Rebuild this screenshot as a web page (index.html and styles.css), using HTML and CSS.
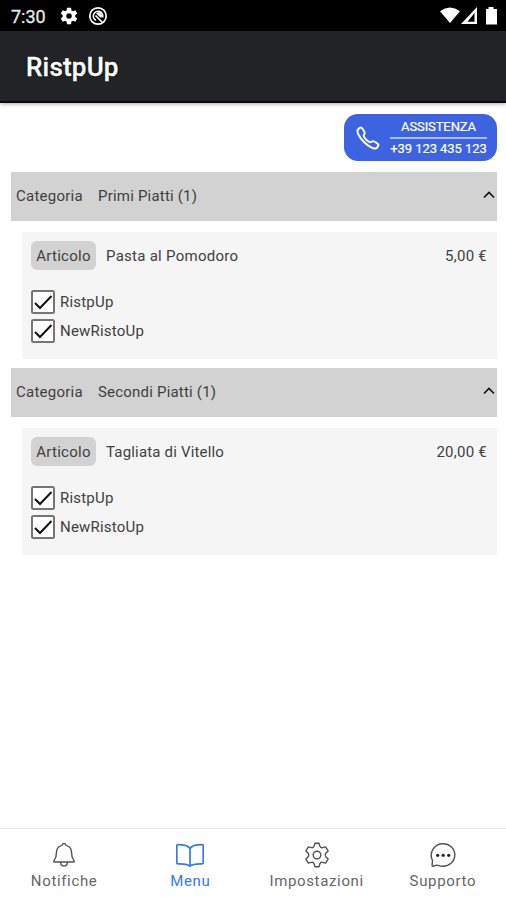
FILE: index.html
```html
<!DOCTYPE html>
<html lang="it">
<head>
<meta charset="utf-8">
<title>RistpUp</title>
<link rel="stylesheet" href="styles.css">
</head>
<body>
<div class="status">
  <span class="clock">7:30</span>
  <svg class="gear" viewBox="0 0 24 24"><path fill="#fff" fill-rule="evenodd" d="M19.400 13a7.600 7.600 0 0 0 0-2l2.500-1.900-2.300-4-2.900 1.200a7.600 7.600 0 0 0-1.800-1L14.400 2h-4.800l-.5 3.300a7.600 7.600 0 0 0-1.800 1L4.400 5.100l-2.300 4L4.600 11a7.600 7.600 0 0 0 0 2l-2.500 1.900 2.300 4 2.900-1.200a7.600 7.600 0 0 0 1.800 1l.5 3.300h4.800l.5-3.300a7.600 7.600 0 0 0 1.800-1l2.900 1.200 2.300-4zM12 15.300a3.300 3.300 0 1 1 0-6.600 3.300 3.300 0 0 1 0 6.600z"/></svg>
  <svg class="at" viewBox="0 0 20 20" fill="none" stroke="#fff"><circle cx="10" cy="10" r="8.200" stroke-width="1.700"/><path stroke-width="1.700" d="M8 14.300A4.700 4.700 0 1 1 14.500 11.500M7.500 9.500l6.500 6.500"/><path fill="#fff" stroke="none" d="M8 7.500a3.200 3.200 0 0 1 5 4.500z"/></svg>
  <svg class="signals" viewBox="0 0 60 18"><path fill="#fff" d="M0 4.200Q10 -3 20 4.200L10 16z"/><path fill="#fff" fill-rule="evenodd" d="M21 17L37 0v17zM27.500 14.800h7V6z"/><path fill="#fff" d="M48.500 0h5v2H57v15.500H46V2h2.500z"/></svg>
</div>
<header class="header"><h1>RistpUp</h1></header>
<main>
  <div class="help">
    <svg class="phone" viewBox="0 0 512 512"><path d="M451 374c-15.900-16-54.300-39.300-73-48.800-24.300-12.200-26.300-13.200-45.400.950-12.700 9.400-21.200 17.900-36.100 14.700s-47.300-21.100-75.700-49.400c-28.300-28.300-47.300-61.600-50.500-76.500s5.400-23.200 14.700-36c13.200-18 12.200-21 .9-45.300-8.800-18.800-32.900-57-48.900-72.800C119.900 44 119.900 47 108.800 51.600A160 160 0 0 0 83 65.400C67 76 58.100 84.900 51.900 98.100s-9 44.200 23 102.100 54.300 88.100 101 134.500S258.500 406.600 310.900 436c64.800 36.300 89.600 29.200 102.900 23s22.200-15 32.800-31a159 159 0 0 0 13.800-25.800c4.600-11.100 7.600-11.100-9.400-28.200z"/></svg>
    <div class="help-text"><span class="help-title">ASSISTENZA</span><span class="help-number">+39 123 435 123</span></div>
  </div>

  <section class="category">
    <div class="bar"><span class="label">Categoria</span><span class="name">Primi Piatti (1)</span><svg class="chev" viewBox="0 0 12 8"><path d="M1 6.500L6 1.500l5 5"/></svg></div>
    <article class="card">
      <div class="item"><span class="tag">Articolo</span><span class="dish">Pasta al Pomodoro</span><span class="price">5,00 €</span></div>
      <div class="check"><svg viewBox="0 0 24 24"><rect x="1" y="1" width="22" height="22" rx="1.500"/><path d="M4 13l5 5L20.500 6"/></svg><span>RistpUp</span></div>
      <div class="check"><svg viewBox="0 0 24 24"><rect x="1" y="1" width="22" height="22" rx="1.500"/><path d="M4 13l5 5L20.500 6"/></svg><span>NewRistoUp</span></div>
    </article>
  </section>

  <section class="category">
    <div class="bar"><span class="label">Categoria</span><span class="name">Secondi Piatti (1)</span><svg class="chev" viewBox="0 0 12 8"><path d="M1 6.500L6 1.500l5 5"/></svg></div>
    <article class="card">
      <div class="item"><span class="tag">Articolo</span><span class="dish dish-tight">Tagliata di Vitello</span><span class="price">20,00 €</span></div>
      <div class="check"><svg viewBox="0 0 24 24"><rect x="1" y="1" width="22" height="22" rx="1.500"/><path d="M4 13l5 5L20.500 6"/></svg><span>RistpUp</span></div>
      <div class="check"><svg viewBox="0 0 24 24"><rect x="1" y="1" width="22" height="22" rx="1.500"/><path d="M4 13l5 5L20.500 6"/></svg><span>NewRistoUp</span></div>
    </article>
  </section>
</main>
<nav class="tabs">
  <div class="tab"><svg viewBox="0 0 28 28"><path d="M4.500 21c-.8 0-1-.8-.5-1.400 1.500-1.800 2.400-2.600 2.400-7.600 0-4.300 2-6.600 5-7.400.6-.2 1-.6 1.200-1.200.4-1.200 2.400-1.200 2.800 0 .2.600.6 1 1.200 1.200 3 .8 5 3.100 5 7.400 0 5 .9 5.800 2.400 7.600.5.600.3 1.400-.5 1.400zM10.700 21.500c0 4.800 6.600 4.800 6.600 0"/></svg><span>Notifiche</span></div>
  <div class="tab active"><svg viewBox="0 0 28 28"><path d="M14 7.500C12 4.500 7 3.700 1.800 3.700c-.5 0-1 .4-1 1v17.100c0 .5.400 1 1 1 5 0 9.700-.3 12.200 2.500 2.500-2.800 7.200-2.500 12.200-2.500.6 0 1-.5 1-1V4.700c0-.6-.5-1-1-1C21 3.700 16 4.500 14 7.500zv17.800"/></svg><span>Menu</span></div>
  <div class="tab"><svg viewBox="0 0 28 28"><path d="M12 1.700h4l.9 2.900c.4 1.200 1.500 1.800 2.700 1.500l3-.7 2.500 4-2.100 2.200c-.9.900-.9 2.900 0 3.800l2.100 2.200-2.500 4-3-.7c-1.200-.3-2.300.3-2.700 1.500l-.9 2.900h-4l-.9-2.900c-.4-1.200-1.500-1.800-2.700-1.500l-3 .7-2.500-4L5 15.400c.9-.9.900-2.900 0-3.800L2.900 9.400l2.500-4 3 .7c1.200.3 2.300-.3 2.700-1.500z" transform="translate(0 .5)"/><circle cx="14" cy="14" r="3.800"/></svg><span>Impostazioni</span></div>
  <div class="tab"><svg viewBox="0 0 28 28"><path d="M3.500 19.500C-.5 11.500 5.500 2.800 14 2.800c6.700 0 11.800 5 11.800 11.300S20.500 25.300 14 25.300c-3 0-4.200-.7-5.800-1.200L4 25.200c-.6.100-1-.4-.9-.9z"/><g fill="currentColor" stroke="none"><circle cx="8.700" cy="14.300" r="1.600"/><circle cx="14.200" cy="14.300" r="1.600"/><circle cx="19.700" cy="14.300" r="1.600"/></g></svg><span>Supporto</span></div>
</nav>
</body>
</html>
```
FILE: styles.css
```css
* { box-sizing: border-box; }
body {
  margin: 0;
  width: 506px;
  height: 900px;
  display: flex;
  flex-direction: column;
  overflow: hidden;
  background: #fff;
  color: #404040;
  font-family: Roboto, "Liberation Sans", sans-serif;
  font-size: 15px;
}
svg { flex: none; display: block; }
.status {
  height: 31px;
  display: flex;
  align-items: center;
  background: #000;
  color: #e8e8e8;
  padding: 1px 8px 0 11px;
}
.clock { font-size: 18px; width: 48px; -webkit-text-stroke: .3px #e8e8e8; }
.gear { width: 20px; height: 20px; }
.at { width: 20px; height: 20px; margin-left: 9px; }
.signals { width: 60px; height: 18px; margin-left: auto; margin-right: -2px; }
.header {
  height: 72px;
  flex: none;
  display: flex;
  align-items: center;
  background: #222326;
  border-bottom: 2px solid #0b0b0c;
  padding: 2px 26px 0;
  box-shadow: 0 1px 4px rgba(0, 0, 0, .35);
}
h1 { margin: 0; font-size: 26px; font-weight: 500; letter-spacing: .2px; color: #fff; text-shadow: 0 0 2px #000; -webkit-text-stroke: .3px #fff; }
main { flex: 1; padding: 11px 9px 0 11px; }
.help {
  width: 153px;
  height: 47px;
  margin: 0 0 11px auto;
  padding: 0 10px 0 11px;
  display: flex;
  align-items: center;
  gap: 9px;
  background: #3d63e0;
  border-radius: 14px;
  color: #fff;
}
.phone { width: 26px; height: 28px; fill: none; stroke: #fff; stroke-width: 38; }
.help-text { width: 97px; display: flex; flex-direction: column; align-items: center; font-size: 13px; white-space: nowrap; -webkit-text-stroke: .2px #fff; }
.help-title { width: 100%; height: 24px; line-height: 23px; text-align: center; border-bottom: 2px solid #a9bcf4; letter-spacing: -.1px; }
.help-number { height: 21px; line-height: 20px; letter-spacing: -.05px; }
.category { margin-bottom: 9px; }
.bar {
  height: 49px;
  display: flex;
  align-items: center;
  padding: 0 2px 1px 5px;
  background: #d2d2d2;
  line-height: 20px;
}
.label { width: 82px; letter-spacing: .25px; }
.name { letter-spacing: .2px; }
.chev { width: 12px; height: 8px; margin: -3px 0 0 auto; fill: none; stroke: #111; stroke-width: 1.6; }
.card { height: 127px; margin: 11px 0 0 11px; padding: 9px 10px 0 9px; background: #f5f5f5; }
.item { height: 29px; display: flex; align-items: center; margin-bottom: 17px; }
.tag { width: 65px; height: 29px; line-height: 30px; margin-right: 10px; text-align: center; background: #d2d2d2; border-radius: 6px; letter-spacing: .25px; }
.dish { letter-spacing: .27px; }
.dish-tight { letter-spacing: .18px; }
.price { margin-left: auto; letter-spacing: .25px; }
.check { height: 29px; display: flex; align-items: center; gap: 5px; letter-spacing: .2px; }
.check svg { width: 24px; height: 24px; fill: #fff; }
.check rect { stroke: #757575; stroke-width: 2; }
.check path { fill: none; stroke: #111; stroke-width: 2; }
.tabs { height: 72px; flex: none; display: grid; grid-template-columns: repeat(4, 1fr); border-top: 1px solid #ebebeb; margin-top: auto; padding-left: 1px; }
.tab { display: flex; flex-direction: column; align-items: center; padding-top: 12px; color: #666; letter-spacing: .65px; }
.tab svg { width: 28px; height: 28px; fill: none; stroke: #505050; stroke-width: 1.4; stroke-linejoin: round; color: #222; }
.tab span { line-height: 22px; margin-top: 1px; }
.tab.active { color: #3478f6; }
.tab.active svg { stroke: #3478f6; stroke-width: 1.7; }
```
